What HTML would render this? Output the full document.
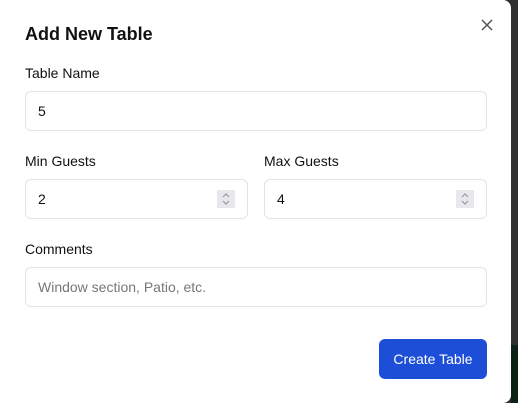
<!DOCTYPE html>
<html><head><style>
body{margin:0;width:518px;height:403px;background:#2f2f2f;position:relative;overflow:hidden;font-family:"Liberation Sans",sans-serif;}
.strip{position:absolute;left:511px;top:345px;width:7px;height:58px;background:#0b2316}
.m{position:absolute;left:0;top:0;width:511px;height:403px;background:#fff;border-radius:0 8px 8px 0;}
.t{position:absolute;left:25px;top:24px;font-size:18px;font-weight:bold;color:#111;}
.l{position:absolute;left:25px;font-size:14px;color:#111;}
.i{position:absolute;border:1px solid #e3e3e3;border-radius:6px;box-sizing:border-box;height:40px;font-size:14px;line-height:38px;padding-left:12px;color:#111;}
.sp{position:absolute;right:12px;top:10px;width:18px;height:18px;background:#e8e8ec;line-height:0;}
.sp svg{display:block}
.b{position:absolute;left:379px;top:339px;width:108px;height:40px;background:#1d4ed8;border-radius:6px;color:#fff;font-size:14px;line-height:40px;text-align:center;}
</style></head><body>
<div class="strip"></div>
<div class="m">
<div class="t">Add New Table</div>
<svg style="position:absolute;left:481px;top:19px" width="12" height="12" viewBox="0 0 12 12"><path d="M1 1L11 11M11 1L1 11" stroke="#555" stroke-width="1.5"/></svg>
<div class="l" style="top:65px">Table Name</div>
<div class="i" style="left:25px;top:91px;width:462px">5</div>
<div class="l" style="top:153px">Min Guests</div>
<div class="l" style="top:153px;left:264px">Max Guests</div>
<div class="i" style="left:25px;top:179px;width:223px">2<div class="sp"><svg width="18" height="18" viewBox="0 0 18 18"><path d="M6 7l3-3 3 3M6 11l3 3 3-3" stroke="#999" fill="none" stroke-width="1.2"/></svg></div></div>
<div class="i" style="left:264px;top:179px;width:223px">4<div class="sp"><svg width="18" height="18" viewBox="0 0 18 18"><path d="M6 7l3-3 3 3M6 11l3 3 3-3" stroke="#999" fill="none" stroke-width="1.2"/></svg></div></div>
<div class="l" style="top:241px">Comments</div>
<div class="i" style="left:25px;top:267px;width:462px;color:#777">Window section, Patio, etc.</div>
<div class="b">Create Table</div>
</div>
</body></html>
